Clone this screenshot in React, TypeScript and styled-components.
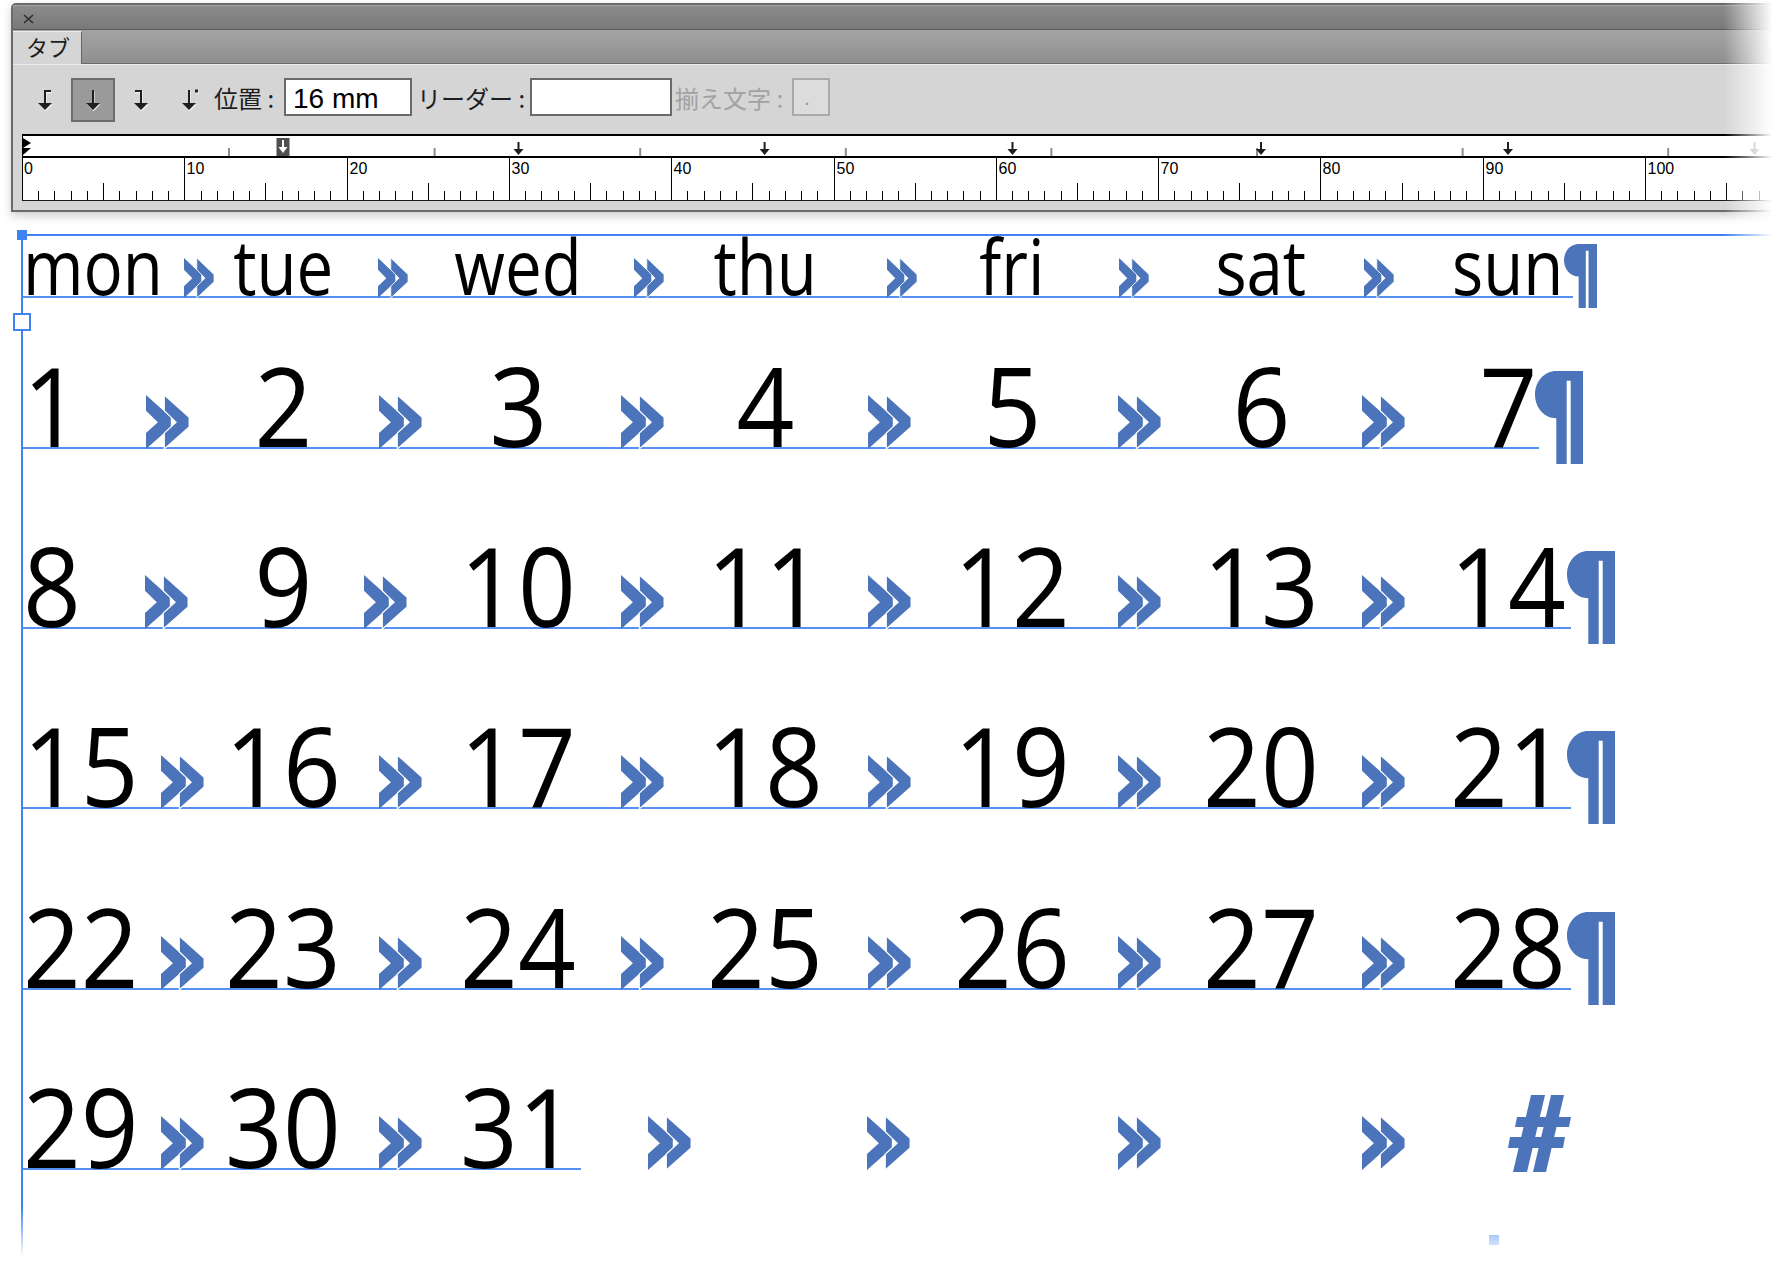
import React from 'react';
import styled, { createGlobalStyle } from 'styled-components';

const GlobalStyle = createGlobalStyle`
  html, body { margin: 0; padding: 0; background: #fff; }
  body { width: 1781px; height: 1261px; overflow: hidden; font-family: "Open Sans", "Noto Sans", sans-serif; }
  #root { width: 1781px; height: 1261px; }
`;

const FRAME_BLUE = '#3f83f2';
const RULE_BLUE = '#5590f2';
const MARK_BLUE = '#4c74ba';

const COL_WIDTHS = [142.5, 235, 235, 259, 235, 263, 231];
const COL_START = [23, 165.5, 400.5, 635.5, 894.5, 1129.5, 1392.5];
const PX_PER_MM = 16.23;

type RowData = {
  words: (string | null)[];
  marks: number[];
  h: number;
  small?: boolean;
  end: 'pilcrow' | 'hash';
};

const ROWS: RowData[] = [
  { words: ['mon', 'tue', 'wed', 'thu', 'fri', 'sat', 'sun'], marks: [184, 378, 634, 887, 1119, 1364], h: 62, small: true, end: 'pilcrow' },
  { words: ['1', '2', '3', '4', '5', '6', '7'], marks: [145.5, 379, 621, 868, 1118, 1362], h: 151, end: 'pilcrow' },
  { words: ['8', '9', '10', '11', '12', '13', '14'], marks: [145, 364, 621, 868, 1118, 1362], h: 180, end: 'pilcrow' },
  { words: ['15', '16', '17', '18', '19', '20', '21'], marks: [160.7, 379, 621, 868, 1118, 1362], h: 180, end: 'pilcrow' },
  { words: ['22', '23', '24', '25', '26', '27', '28'], marks: [160.7, 379, 621, 868, 1118, 1362], h: 181, end: 'pilcrow' },
  { words: ['29', '30', '31', null, null, null, null], marks: [160.7, 379, 648, 867, 1118, 1362], h: 180, end: 'hash' },
];

/* ---------- page ---------- */

const Page = styled.div`
  position: relative;
  width: 1781px;
  height: 1261px;
  overflow: hidden;
  background: #fff;
`;

const EdgeFade = styled.div`
  position: absolute;
  top: 0;
  bottom: 0;
  left: 1724px;
  width: 57px;
  background: linear-gradient(to right, rgba(255, 255, 255, 0), #fff 85%);
  pointer-events: none;
`;

const BottomFade = styled.div`
  position: absolute;
  left: 0;
  right: 0;
  top: 1208px;
  height: 53px;
  background: linear-gradient(to bottom, rgba(255, 255, 255, 0), #fff 92%);
  pointer-events: none;
`;

/* ---------- tabs panel ---------- */

const Panel = styled.section`
  margin: 3px 0 0 11px;
  width: 1800px;
  border: 2px solid #6a6a6a;
  border-radius: 5px 0 0 0;
  background: #d5d5d5;
  box-shadow: 0 4px 10px rgba(0, 0, 0, 0.2);
  font-family: "Noto Sans CJK JP", sans-serif;
`;

const TitleBar = styled.div`
  height: 24px;
  border-bottom: 1px solid #5a5a5a;
  border-radius: 3px 0 0 0;
  background: linear-gradient(#8c8c8c, #797979);
  box-shadow: inset 0 1px 0 #a2a2a2;
  display: flex;
  align-items: center;
  padding-left: 10px;
`;

const CloseIcon = styled.svg`
  width: 11px;
  height: 10px;
  margin-top: 3px;
  display: block;
`;

const TabRow = styled.div`
  height: 34px;
  display: flex;
  align-items: flex-end;
  background: linear-gradient(#a4a4a4, #8e8e8e);
`;

const Tab = styled.div`
  width: 69px;
  height: 33px;
  box-sizing: border-box;
  background: #d5d5d5;
  border-top: 1px solid #ededed;
  border-right: 1px solid #666;
  display: flex;
  align-items: center;
  padding: 0 0 4px 13px;
  font-size: 22px;
  color: #1d1d1d;
`;

const TabFiller = styled.div`
  flex: 1;
  align-self: stretch;
  border-bottom: 1px solid #6a6a6a;
`;

const PanelBody = styled.div`
  border-top: 1px solid #ebebeb;
  padding: 13px 0 9px 0;
`;

const Controls = styled.div`
  display: flex;
  align-items: flex-start;
  height: 44px;
  padding-left: 10px;
`;

const ToolGroup = styled.div`
  display: flex;
  gap: 4px;
`;

const ToolButton = styled.div<{ $active?: boolean }>`
  width: 44px;
  height: 44px;
  box-sizing: border-box;
  display: flex;
  align-items: center;
  justify-content: center;
  border: 2px solid ${(p) => (p.$active ? '#6d6d6d' : 'transparent')};
  background: ${(p) => (p.$active ? '#9a9a9a' : 'transparent')};
`;

const IconSvg = styled.svg`
  width: 20px;
  height: 23px;
  display: block;
`;

const Label = styled.span<{ $w: number; $pl: number; $disabled?: boolean }>`
  width: ${(p) => p.$w}px;
  padding-left: ${(p) => p.$pl}px;
  box-sizing: border-box;
  height: 38px;
  display: flex;
  align-items: center;
  font-size: 24px;
  white-space: nowrap;
  color: ${(p) => (p.$disabled ? '#a2a2a2' : '#1e1e1e')};
`;

const Field = styled.div<{ $w: number }>`
  width: ${(p) => p.$w}px;
  height: 38px;
  box-sizing: border-box;
  border: 2px solid #6a6a6a;
  background: #fff;
  display: flex;
  align-items: center;
  padding: 3px 0 0 7px;
  font-family: "Liberation Sans", Arial, sans-serif;
  font-size: 28px;
  color: #000;
`;

const CharBox = styled.div`
  width: 38px;
  height: 38px;
  box-sizing: border-box;
  border: 2px solid #a9a9a9;
  background: #dcdcdc;
  display: flex;
  align-items: flex-end;
  justify-content: center;
  padding: 0 8px 5px 0;
  font-family: "Liberation Sans", Arial, sans-serif;
  font-size: 22px;
  line-height: 1;
  color: #9c9c9c;
`;

const Ruler = styled.div`
  margin: 12px 0 0 9px;
  border-top: 2px solid #000;
  border-left: 1px solid #000;
  border-bottom: 1px solid #1a1a1a;
  background: #fff;
`;

const TabStrip = styled.div`
  height: 20px;
  border-bottom: 2px solid #000;
`;

const Scale = styled.div`
  height: 42px;
`;

const RulerSvg = styled.svg`
  display: block;
  width: 1800px;
  height: 100%;
`;

/* ---------- text frame ---------- */

const Frame = styled.div`
  position: relative;
  margin: 22px 0 0 21px;
  height: 1030px;
  border-top: 2px solid ${FRAME_BLUE};
  border-left: 2px solid ${FRAME_BLUE};
`;

const CornerHandle = styled.div`
  position: absolute;
  left: -6px;
  top: -6px;
  width: 10px;
  height: 10px;
  background: ${FRAME_BLUE};
`;

const InPort = styled.div`
  position: absolute;
  left: -10px;
  top: 77px;
  width: 18px;
  height: 18px;
  box-sizing: border-box;
  border: 2px solid ${FRAME_BLUE};
  background: #fff;
`;

const BottomHandle = styled.div`
  position: absolute;
  left: 1466px;
  top: 999px;
  width: 10px;
  height: 10px;
  background: ${FRAME_BLUE};
`;

const Line = styled.div<{ $h: number }>`
  display: grid;
  grid-template-columns: ${COL_WIDTHS.map((w) => `${w}px`).join(' ')} 1fr;
  height: ${(p) => p.$h}px;
  align-items: end;
`;

const Cell = styled.div<{ $col: number }>`
  grid-row: 1;
  grid-column: ${(p) => p.$col + 1};
  display: flex;
  align-items: flex-end;
  min-width: 0;
`;

const Fill = styled.div<{ $ruled?: boolean }>`
  flex: 1 1 0;
  min-width: 0;
  display: flex;
  align-items: flex-end;
  border-bottom: 2px solid ${(p) => (p.$ruled ? RULE_BLUE : 'transparent')};
`;

const Word = styled.div<{ $small?: boolean; $ruled?: boolean }>`
  flex: none;
  font-family: "Open Sans", "Noto Sans", sans-serif;
  font-size: ${(p) => (p.$small ? 76 : 110)}px;
  line-height: 0.776;
  color: #000;
  white-space: nowrap;
  border-bottom: 2px solid ${(p) => (p.$ruled ? RULE_BLUE : 'transparent')};
`;

const Glyphs = styled.span<{ $squeeze: number; $origin: string }>`
  display: inline-block;
  transform: scaleX(${(p) => p.$squeeze});
  transform-origin: ${(p) => p.$origin} bottom;
`;

const TabMark = styled.svg<{ $col: number; $dx: number; $small?: boolean }>`
  grid-row: 1;
  grid-column: ${(p) => p.$col + 1};
  justify-self: start;
  align-self: end;
  display: block;
  margin-left: ${(p) => p.$dx}px;
  width: ${(p) => (p.$small ? 30 : 43)}px;
  height: ${(p) => (p.$small ? 40 : 54)}px;
`;

const PilcrowSvg = styled.svg<{ $small?: boolean }>`
  display: block;
  flex: none;
  width: ${(p) => (p.$small ? 33 : 48)}px;
  height: ${(p) => (p.$small ? 64 : 93)}px;
  margin-left: ${(p) => (p.$small ? -9 : -4)}px;
  margin-bottom: ${(p) => (p.$small ? -12 : -17)}px;
`;

const HashSvg = styled.svg`
  display: block;
  flex: none;
  width: 63px;
  height: 77px;
  margin-bottom: -4px;
`;

/* ---------- drawings ---------- */

function TabAlignIcon({ kind }: { kind: 'left' | 'center' | 'right' | 'decimal' }) {
  const shape = (
    <>
      <rect x="9" y="1" width="2" height="14" />
      <polygon points="3,14 17,14 10,21" />
      {kind === 'left' && <rect x="9" y="1" width="7" height="2" />}
      {kind === 'right' && <rect x="4" y="1" width="7" height="2" />}
      {kind === 'decimal' && <rect x="16" y="0.5" width="3" height="3" />}
    </>
  );
  return (
    <IconSvg viewBox="0 0 20 23">
      <g fill="#fff" opacity="0.8" transform="translate(0.6 1.2)">
        {shape}
      </g>
      <g fill="#1f1f1f">{shape}</g>
    </IconSvg>
  );
}

function TabArrow({ x, color }: { x: number; color: string }) {
  return (
    <g fill={color}>
      <rect x={x - 1} y={6} width={2} height={8} />
      <polygon points={`${x - 5},13 ${x + 5},13 ${x},19`} />
    </g>
  );
}

function TabStripDrawing() {
  const off = 23;
  const ticks = Array.from({ length: 8 }, (_, n) => 229 + 205.6 * n);
  const tabs = [518.5, 764.6, 1012.5, 1261, 1508];
  const sel = 283 - off;
  return (
    <RulerSvg>
      <polygon points="0,2 8,7 0,12" fill="#000" />
      <polygon points="0,12 8,12 0,19" fill="#000" />
      {ticks.map((t) => (
        <rect key={t} x={t - off - 1} y={12} width={2} height={8} fill="#8e8e8e" />
      ))}
      <rect x={sel - 6.5} y={2} width={13} height={18} fill="#4f4f4f" />
      <g fill="#fff">
        <rect x={sel - 1} y={4} width={2} height={8} />
        <polygon points={`${sel - 4.5},11 ${sel + 4.5},11 ${sel},17`} />
      </g>
      {tabs.map((t) => (
        <TabArrow key={t} x={t - off} color="#1e1e1e" />
      ))}
      <TabArrow x={1754.6 - off} color="#9a9a9a" />
    </RulerSvg>
  );
}

function ScaleDrawing() {
  const ticks = Array.from({ length: 108 }, (_, i) => i + 1);
  return (
    <RulerSvg>
      {ticks.map((k) => {
        const x = Math.round(22 + PX_PER_MM * k) - 23 + 0.5;
        const y1 = k % 10 === 0 ? 0 : k % 5 === 0 ? 25 : 33;
        return <line key={k} x1={x} x2={x} y1={y1} y2={42} stroke="#000" strokeWidth={1} />;
      })}
      {Array.from({ length: 11 }, (_, i) => i * 10).map((n) => {
        const x = n === 0 ? 1 : Math.round(22 + PX_PER_MM * n) - 23 + 2.5;
        return (
          <text key={n} x={x} y={15.5} fontFamily='"Liberation Sans", Arial, sans-serif' fontSize={16} fill="#000">
            {n}
          </text>
        );
      })}
    </RulerSvg>
  );
}

const CHEVRON = 'M0 0 L24.8 22.3 L24.8 32 L0 54 L0 38 L11.9 27.2 L0 15.7 Z';

function TabGlyph({ col, x, small }: { col: number; x: number; small?: boolean }) {
  return (
    <TabMark $col={col} $dx={x - COL_START[col]} $small={small} viewBox="0 0 43 54" preserveAspectRatio="none">
      <path d={CHEVRON} fill={MARK_BLUE} />
      <path d={CHEVRON} transform="translate(18.3 0)" fill={MARK_BLUE} stroke="#fff" strokeWidth={1.1} />
    </TabMark>
  );
}

function Pilcrow({ small }: { small?: boolean }) {
  return (
    <PilcrowSvg $small={small} viewBox="0 0 48 93" preserveAspectRatio="none">
      <path
        d="M21.3 0 H48 V93 H35.7 V9.7 H31.7 V93 H21.3 V47.3 C9.5 47.3 0 37 0 23.6 C0 10.3 9.5 0 21.3 0 Z"
        fill={MARK_BLUE}
      />
    </PilcrowSvg>
  );
}

function EndOfStory() {
  return (
    <HashSvg viewBox="0 0 63 77">
      <g fill={MARK_BLUE}>
        <polygon points="23,0 37,0 19,77 5,77" />
        <polygon points="43,0 56,0 38,77 25,77" />
        <polygon points="9,22 63,22 61,32 7,32" />
        <polygon points="2,42 57,42 55,53 0,53" />
      </g>
    </HashSvg>
  );
}

function TextLine({ row }: { row: RowData }) {
  const last = row.words.reduce<number>((acc, w, i) => (w ? i : acc), -1);
  const squeeze = row.small ? 0.86 : 0.92;
  return (
    <Line $h={row.h}>
      {row.words.map((w, i) => {
        const ruledLeft = i <= last;
        const ruledRight = i < last;
        const showPilcrow = row.end === 'pilcrow' && i === last;
        const showHash = row.end === 'hash' && i === row.words.length - 1;
        return (
          <Cell key={i} $col={i}>
            {i > 0 && <Fill $ruled={ruledLeft} />}
            <Word $small={row.small} $ruled={ruledLeft && !!w}>
              {w && (
                <Glyphs $squeeze={squeeze} $origin={i === 0 ? 'left' : 'center'}>
                  {w}
                </Glyphs>
              )}
            </Word>
            <Fill $ruled={ruledRight}>
              {showPilcrow && <Pilcrow small={row.small} />}
              {showHash && <EndOfStory />}
            </Fill>
          </Cell>
        );
      })}
      {row.marks.map((x, j) => (
        <TabGlyph key={`m${j}`} col={j + 1} x={x} small={row.small} />
      ))}
    </Line>
  );
}

export default function App() {
  return (
    <>
      <GlobalStyle />
      <Page>
        <Panel>
          <TitleBar>
            <CloseIcon viewBox="0 0 11 10">
              <path d="M1 1 L10 9 M10 1 L1 9" stroke="#2e2e2e" strokeWidth={1.6} />
            </CloseIcon>
          </TitleBar>
          <TabRow>
            <Tab>タブ</Tab>
            <TabFiller />
          </TabRow>
          <PanelBody>
            <Controls>
              <ToolGroup>
                <ToolButton>
                  <TabAlignIcon kind="left" />
                </ToolButton>
                <ToolButton $active>
                  <TabAlignIcon kind="center" />
                </ToolButton>
                <ToolButton>
                  <TabAlignIcon kind="right" />
                </ToolButton>
                <ToolButton>
                  <TabAlignIcon kind="decimal" />
                </ToolButton>
              </ToolGroup>
              <Label $w={73} $pl={3}>位置 :</Label>
              <Field $w={128}>16 mm</Field>
              <Label $w={118} $pl={5}>リーダー :</Label>
              <Field $w={142} />
              <Label $w={120} $pl={3} $disabled>
                揃え文字 :
              </Label>
              <CharBox>.</CharBox>
            </Controls>
            <Ruler>
              <TabStrip>
                <TabStripDrawing />
              </TabStrip>
              <Scale>
                <ScaleDrawing />
              </Scale>
            </Ruler>
          </PanelBody>
        </Panel>
        <Frame>
          <CornerHandle />
          <InPort />
          {ROWS.map((row, i) => (
            <TextLine key={i} row={row} />
          ))}
          <BottomHandle />
        </Frame>
        <EdgeFade />
        <BottomFade />
      </Page>
    </>
  );
}
